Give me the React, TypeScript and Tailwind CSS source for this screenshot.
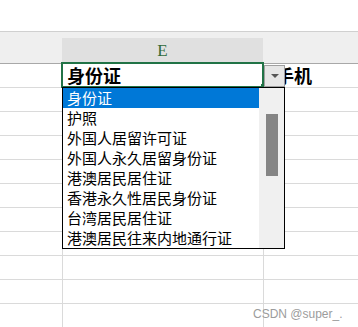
import React from "react";

const options = [
  "身份证",
  "护照",
  "外国人居留许可证",
  "外国人永久居留身份证",
  "港澳居民居住证",
  "香港永久性居民身份证",
  "台湾居民居住证",
  "港澳居民往来内地通行证",
];

const cjk = "font-['Noto_Sans_CJK_SC',sans-serif]";

const Row = ({ children, next }: { children?: React.ReactNode; next?: React.ReactNode }) => (
  <div className="flex h-[24px] border-b border-[#dadada]">
    <div className="w-[63px] border-r border-[#dadada]" />
    <div className="w-[201px] border-r border-[#dadada]">{children}</div>
    <div className="flex-1">{next}</div>
  </div>
);

const App = () => {
  return (
    <div className="relative w-[358px] h-[327px] overflow-hidden bg-white">
      {/* ribbon / formula area */}
      <div className="h-[31px]" />
      <div className="h-px bg-[#d0d0d0]" />

      {/* column headers */}
      <div className="flex h-[31px] bg-[#efefef]">
        <div className="w-[62px]" />
        <div className="w-[201px] flex flex-col">
          <div className="h-[8px]" />
          <div className="flex-1 bg-[#e0e0e0] flex items-center justify-center font-['Liberation_Serif',serif] text-[17px] text-[#2f6b3a]">
            E
          </div>
        </div>
        <div className="flex-1" />
      </div>
      <div className="h-px bg-[#a8a8a8]" />

      {/* grid rows */}
      <Row
        next={
          <div className={`pl-[12px] leading-[23px] text-[18px] font-bold text-black ${cjk}`}>手机</div>
        }
      >
        <div className={`pl-[4px] leading-[23px] text-[18px] font-bold text-black ${cjk}`}>身份证</div>
      </Row>
      {Array.from({ length: 10 }).map((_, i) => (
        <Row key={i} />
      ))}

      {/* selected cell */}
      <div className="absolute left-[61px] top-[62px] w-[203px] h-[26px] border-2 border-[#217346]" />
      <div className="absolute left-[261px] top-[84px] w-[4px] h-[4px] bg-[#217346]" />

      {/* dropdown button */}
      <div className="absolute left-[264px] top-[65px] w-[21px] h-[22px] bg-[#e6e6e6] border border-[#a0a0a0] flex items-center justify-center">
        <svg width="8" height="5" viewBox="0 0 8 5">
          <path d="M0 0H8L4 4Z" fill="#555" />
        </svg>
      </div>

      {/* dropdown list */}
      <div className="absolute left-[62px] top-[87px] w-[223px] h-[162px] border border-black bg-white flex">
        <div className="w-[196px] flex flex-col">
          {options.map((o, i) => (
            <div
              key={o}
              className={`h-[20px] pl-[4px] leading-[20px] text-[15px] whitespace-nowrap ${cjk} ${
                i === 0 ? "bg-[#0078d7] text-white" : "text-black"
              }`}
            >
              {o}
            </div>
          ))}
        </div>
        <div className="flex-1 bg-[#f0f0f0]">
          <div className="mt-[26px] ml-[7px] w-[12px] h-[62px] bg-[#858585]" />
        </div>
      </div>

      {/* watermark */}
      <div className="absolute left-[253px] top-[305px] font-['Liberation_Sans',sans-serif] text-[12px] text-[#9c9c9c]">
        CSDN @super_.
      </div>
    </div>
  );
};

export default App;
